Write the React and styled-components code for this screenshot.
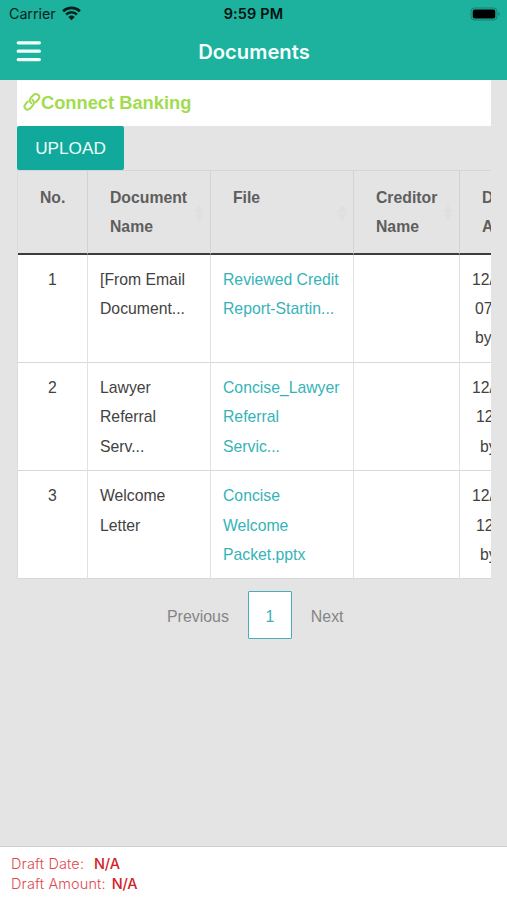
import React from "react";
import styled, { createGlobalStyle } from "styled-components";

const GlobalStyle = createGlobalStyle`
  * {
    box-sizing: border-box;
  }
  body {
    margin: 0;
    background-color: #e4e4e4;
    font-family: "Liberation Sans", Arial, sans-serif;
  }
`;

const Page = styled.div`
  display: flex;
  flex-direction: column;
  height: 900px;
  width: 507px;
  overflow: hidden;
  background-color: #e4e4e4;
`;

const Header = styled.header`
  height: 79.5px;
  flex-shrink: 0;
  background-color: #1cb29d;
  font-family: Inter, sans-serif;
`;

const StatusBar = styled.div`
  display: grid;
  grid-template-columns: 1fr auto 1fr;
  align-items: center;
  height: 27px;
  padding: 0 6px 0 9px;
  color: #07241f;
`;

const Carrier = styled.div`
  display: flex;
  align-items: center;
  gap: 6px;
  font-size: 14.3px;
  letter-spacing: -0.05px;
`;

const Clock = styled.div`
  padding-right: 3px;
  font-size: 14.5px;
  font-weight: 600;
  letter-spacing: 0.15px;
  color: #04110f;
`;

const BatteryIcon = styled.svg`
  justify-self: end;
`;

const NavBar = styled.div`
  display: grid;
  grid-template-columns: 40px 1fr 40px;
  align-items: center;
  height: 50px;
  padding: 0 16px;
`;

const Title = styled.h1`
  margin: 0;
  padding: 0 0 1px 1px;
  text-align: center;
  font-size: 20.2px;
  font-weight: 600;
  color: #f5fffd;
`;

const Content = styled.main`
  flex: 1;
  padding: 0 16px 0 17px;
`;

const BankLink = styled.a`
  display: flex;
  align-items: center;
  height: 46px;
  padding: 1px 0 0 6px;
  background-color: white;
  color: #a1dc4e;
  font-size: 18.3px;
  font-weight: bold;
`;

const UploadButton = styled.button`
  display: block;
  width: 107px;
  height: 44px;
  padding: 1px 0 0;
  border: none;
  border-radius: 2px;
  background-color: #10a99b;
  color: #effffc;
  font-family: inherit;
  font-size: 17.2px;
`;

const TableWrap = styled.div`
  overflow: hidden;
`;

const Table = styled.table`
  width: 537px;
  table-layout: fixed;
  border-spacing: 0;
  border-left: 1px solid #d9dcdc;
  font-size: 15.75px;
  line-height: 29.4px;
  color: #424242;
`;

const HeadCell = styled.th`
  height: 85px;
  padding: 12px 20px 0 22px;
  border-top: 1px solid #d6d6d6;
  border-right: 1px solid #d3d3d3;
  border-bottom: 2px solid #3c3b3d;
  vertical-align: top;
  text-align: left;
  color: #5e5e5e;
  position: relative;
`;

const SortIcon = styled.svg`
  position: absolute;
  right: 6px;
  top: 34px;
`;

const Cell = styled.td`
  height: 108.3px;
  padding: 10px 0 0 12px;
  border-right: 1px solid #dfe2e2;
  border-bottom: 1px solid #d5d9d9;
  background-color: white;
  vertical-align: top;
  white-space: nowrap;
`;

const NumberCell = styled(Cell)`
  padding-left: 0;
  text-align: center;
`;

const FileLink = styled.a`
  color: #36b3b8;
`;

const Line = styled.div`
  padding-left: ${(props) => props.$indent || 0}px;
`;

const Pagination = styled.nav`
  display: flex;
  align-items: center;
  height: 48px;
  margin-top: 12px;
  padding-left: 150px;
  font-size: 15.9px;
  color: #858585;
`;

const CurrentPage = styled.span`
  display: flex;
  align-items: center;
  justify-content: center;
  width: 44px;
  height: 48px;
  margin: 0 19px;
  padding-top: 3px;
  border: 1px solid #4badb8;
  border-radius: 1px;
  background-color: white;
  color: #45acb8;
`;

const PageLink = styled.span`
  padding-top: 3px;
`;

const Footer = styled.footer`
  height: 54px;
  flex-shrink: 0;
  padding: 7px 11px;
  border-top: 1px solid #cfcfcf;
  background-color: white;
  font-family: Inter, sans-serif;
  font-size: 14.5px;
  letter-spacing: 0.12px;
  line-height: 19.6px;
  color: #dd4b4f;
`;

const DraftRow = styled.div`
  display: flex;
  gap: ${(props) => props.$gap}px;
  font-weight: 300;
`;

const DraftValue = styled.span`
  font-weight: 500;
  letter-spacing: -0.2px;
  color: #d42127;
`;

const columns = [
  { width: 70, lines: ["No."] },
  { width: 123, lines: ["Document", "Name"], sort: true },
  { width: 143, lines: ["File"], sort: true },
  { width: 106, lines: ["Creditor", "Name"], sort: true },
  { width: 94, lines: ["D", "A"] },
];

const documents = [
  {
    name: ["[From Email", "Document..."],
    file: ["Reviewed Credit", "Report-Startin..."],
    added: [["12/", 0], ["07", 3], ["by", 3]],
  },
  {
    name: ["Lawyer", "Referral", "Serv..."],
    file: ["Concise_Lawyer", "Referral", "Servic..."],
    added: [["12/", 0], ["12", 4], ["by", 8]],
  },
  {
    name: ["Welcome", "Letter"],
    file: ["Concise", "Welcome", "Packet.pptx"],
    added: [["12/", 0], ["12", 4], ["by", 8]],
  },
];

const Wifi = () => (
  <svg width="19" height="15" viewBox="0 0 19 15" fill="none" stroke="#05211c">
    <path d="M1.1 5.2C5.8.7 13.2.7 17.9 5.2" strokeWidth="2.6" />
    <path d="M4.1 8.5C7.2 5.6 11.8 5.6 14.9 8.5" strokeWidth="2.5" />
    <path d="M6.3 10.9Q9.5 8.1 12.7 10.9L9.5 14.2Z" fill="#05211c" stroke="none" />
  </svg>
);

const Battery = () => (
  <BatteryIcon width="31" height="14" viewBox="0 0 31 14">
    <rect x="1" y="1" width="26" height="12" rx="3.5" fill="none" stroke="#12806f" />
    <rect x="2.7" y="2.5" width="22.6" height="9" rx="2" fill="black" />
    <path d="M28.5 5Q31.5 7 28.5 9Z" fill="#128573" />
  </BatteryIcon>
);

const Menu = () => (
  <svg width="26" height="24" viewBox="0 0 26 24" stroke="#f0fffc">
    <path
      d="M2.2 2.8H23.4M2.2 11.2H23.4M2.2 19.6H23.4"
      strokeWidth="3.2"
      strokeLinecap="round"
    />
  </svg>
);

const Chain = () => (
  <svg
    width="18"
    height="20"
    viewBox="0 0 18 20"
    fill="none"
    stroke="#a1dc4e"
    strokeWidth="2"
    strokeLinecap="round"
  >
    <path d="M8.4 10.2C6.4 8.8 6.3 6.5 7.8 4.8L10.6 1.9C13.5-.4 18.2 3 15.7 6L12.6 9.3" />
    <path d="M9.3 6.8C11.2 8.2 11.5 10.5 9.9 12.3L7 15.6C4 18.4-.3 14.5 2.3 11.4L4.8 8.5" />
  </svg>
);

const Sort = () => (
  <SortIcon width="10" height="16" viewBox="0 0 10 16" fill="#dedfdf">
    <path d="M5 0L9.5 7.5H.5ZM5 16L.5 8.5H9.5Z" />
  </SortIcon>
);

const App = () => {
  return (
    <Page>
      <GlobalStyle />
      <Header>
        <StatusBar>
          <Carrier>
            Carrier
            <Wifi />
          </Carrier>
          <Clock>9:59 PM</Clock>
          <Battery />
        </StatusBar>
        <NavBar>
          <Menu />
          <Title>Documents</Title>
        </NavBar>
      </Header>
      <Content>
        <BankLink>
          <Chain />
          Connect Banking
        </BankLink>
        <UploadButton>UPLOAD</UploadButton>
        <TableWrap>
          <Table>
            <colgroup>
              {columns.map((column, index) => (
                <col key={index} width={column.width} />
              ))}
            </colgroup>
            <thead>
              <tr>
                {columns.map((column, index) => (
                  <HeadCell key={index}>
                    {column.lines.map((line) => (
                      <Line key={line}>{line}</Line>
                    ))}
                    {column.sort && <Sort />}
                  </HeadCell>
                ))}
              </tr>
            </thead>
            <tbody>
              {documents.map((doc, index) => (
                <tr key={index}>
                  <NumberCell>{index + 1}</NumberCell>
                  <Cell>
                    {doc.name.map((line) => (
                      <Line key={line}>{line}</Line>
                    ))}
                  </Cell>
                  <Cell>
                    <FileLink>
                      {doc.file.map((line) => (
                        <Line key={line}>{line}</Line>
                      ))}
                    </FileLink>
                  </Cell>
                  <Cell />
                  <Cell>
                    {doc.added.map(([line, indent]) => (
                      <Line key={line} $indent={indent}>
                        {line}
                      </Line>
                    ))}
                  </Cell>
                </tr>
              ))}
            </tbody>
          </Table>
        </TableWrap>
        <Pagination>
          <PageLink>Previous</PageLink>
          <CurrentPage>1</CurrentPage>
          <PageLink>Next</PageLink>
        </Pagination>
      </Content>
      <Footer>
        <DraftRow $gap={10}>
          Draft Date: <DraftValue>N/A</DraftValue>
        </DraftRow>
        <DraftRow $gap={6}>
          Draft Amount: <DraftValue>N/A</DraftValue>
        </DraftRow>
      </Footer>
    </Page>
  );
};

export default App;
